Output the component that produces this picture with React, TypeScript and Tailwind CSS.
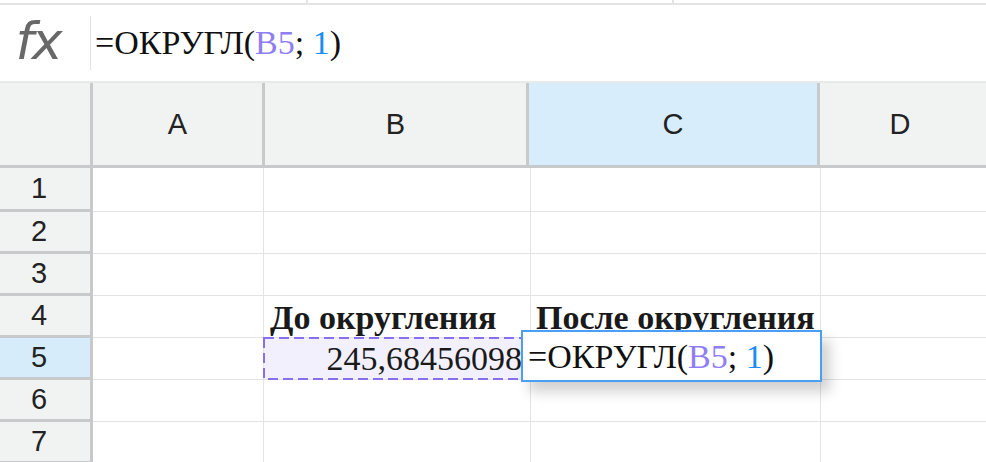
import React from "react";

const serif = { fontFamily: '"Liberation Serif", "Times New Roman", serif' };
const sans = { fontFamily: '"Liberation Sans", Arial, sans-serif' };

function Formula() {
  return (
    <>
      <span>=ОКРУГЛ(</span>
      <span className="text-[#8f7ef5]">B5</span>
      <span>; </span>
      <span className="text-[#1b8df2]">1</span>
      <span>)</span>
    </>
  );
}

const rows = [1, 2, 3, 4, 5, 6, 7];

export default function App() {
  return (
    <div className="relative w-[986px] h-[462px] overflow-hidden bg-white">
      {/* top strip */}
      <div className="flex h-[5px] border-b-2 border-[#e4e4e4]">
        <div className="w-[308px] border-r-2 border-[#e4e4e4]" />
        <div className="w-[366px] border-r-2 border-[#e4e4e4]" />
      </div>

      {/* formula bar */}
      <div className="flex h-[76px] items-center">
        <div className="flex w-[90px] items-center justify-center">
          <span
            className="text-[52px] italic leading-none text-[#686868] -mt-[4px] mr-[14px] tracking-[-2px]"
            style={{ fontFamily: '"DejaVu Sans", sans-serif' }}
          >
            fx
          </span>
        </div>
        <div className="h-[54px] w-px bg-[#e2e2e2]" />
        <div className="pl-[4px] text-[34px] leading-none text-[#111]" style={serif}>
          <Formula />
        </div>
      </div>
      <div className="h-[2px] bg-[#e8e9e9]" />

      {/* column header */}
      <div
        className="flex h-[85px] border-b-[3px] border-[#c7c9ca] bg-[#f1f2f2] text-[29px] text-[#222]"
        style={sans}
      >
        <div className="w-[93px] border-r-[3px] border-[#c7c9ca]" />
        <div className="flex w-[172px] items-center justify-center border-r-[3px] border-[#c7c9ca] pt-[2px]">
          A
        </div>
        <div className="flex w-[264px] items-center justify-center border-r-[3px] border-[#c7c9ca] pt-[2px]">
          B
        </div>
        <div className="flex w-[291px] items-center justify-center border-r-[3px] border-[#c7c9ca] bg-[#d7edfc] pt-[2px]">
          C
        </div>
        <div className="flex flex-1 items-center justify-center pr-[6px] pt-[2px]">D</div>
      </div>

      {/* body */}
      <div className="flex flex-col">
        {rows.map((r) => (
          <div key={r} className={`flex ${r === 1 ? "h-[44px]" : "h-[42px]"}`}>
            <div
              className={`flex w-[93px] items-center justify-center border-r-[3px] border-b-[3px] border-[#c7c9ca] text-[29px] text-[#222] pr-[12px] ${
                r === 5 ? "bg-[#d6ecfa]" : "bg-[#f1f2f2]"
              }`}
              style={sans}
            >
              {r}
            </div>
            <div className="w-[171px] border-r border-b border-[#e3e3e3]" />
            <div
              className="w-[267px] border-r border-b border-[#e3e3e3] text-[34px] leading-[42px] text-[#1a1a1a]"
              style={serif}
            >
              {r === 4 && (
                <div className="whitespace-nowrap pl-[6px] pt-[1px] font-bold">До округления</div>
              )}
            </div>
            <div
              className="w-[290px] border-r border-b border-[#e3e3e3] text-[34px] leading-[42px] text-[#1a1a1a]"
              style={serif}
            >
              {r === 4 && (
                <div className="whitespace-nowrap pl-[5px] pt-[1px] font-bold">После округления</div>
              )}
            </div>
            <div className="flex-1 border-b border-[#e3e3e3]" />
          </div>
        ))}
      </div>

      {/* copy marquee on B5 */}
      <svg
        className="absolute left-[263px] top-[337px]"
        width="266"
        height="43"
        viewBox="0 0 266 43"
      >
        <rect
          x="1"
          y="1"
          width="264"
          height="41"
          fill="rgba(140,110,240,0.10)"
          stroke="#8a6ef0"
          strokeWidth="2"
          strokeDasharray="10 5"
        />
      </svg>
      <div
        className="absolute left-[263px] top-[337px] flex h-[43px] w-[266px] items-center justify-end pr-[7px] text-[34px] leading-[42px] text-[#1a1a1a]"
        style={serif}
      >
        245,68456098
      </div>

      {/* cell editor */}
      <div
        className="absolute left-[521px] top-[330px] flex h-[52px] w-[301px] items-end border-2 border-[#4a9ff5] bg-white pb-[2px] pl-[5px] text-[34px] leading-[42px] text-[#111] shadow-[8px_10px_12px_rgba(0,0,0,0.18)]"
        style={serif}
      >
        <span className="whitespace-nowrap">
          <Formula />
        </span>
      </div>
    </div>
  );
}
